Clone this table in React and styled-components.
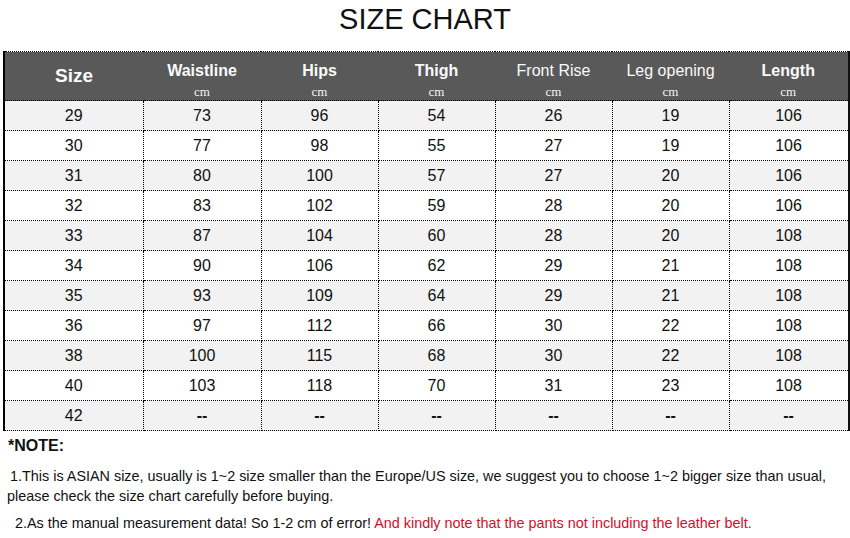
import React from 'react';
import styled, { createGlobalStyle } from 'styled-components';

const GlobalStyle = createGlobalStyle`
  body {
    margin: 0;
    background: #fff;
    font-family: Arial, "Liberation Sans", sans-serif;
  }
`;

const Page = styled.div`
  width: 850px;
  height: 538px;
  overflow: hidden;
`;

const Title = styled.h1`
  margin: 0;
  height: 51px;
  font-size: 29px;
  font-weight: 400;
  line-height: 39px;
  text-align: center;
  color: #111;
`;

const Table = styled.table`
  margin-left: 3px;
  width: 845px;
  border-collapse: collapse;
  table-layout: fixed;
  border-left: 2px solid #000;
  border-right: 3px solid #111;
`;

const HeadCell = styled.th`
  height: 49px;
  padding: ${(p) => (p.$big ? '14px' : '9px')} 0 0 0;
  background: #595959;
  color: #fafafa;
  border-top: 1px dotted #000;
  border-bottom: 1px dotted #000;
  font-weight: ${(p) => (p.$light ? 400 : 700)};
  vertical-align: top;
  box-sizing: border-box;
`;

const HeadTitle = styled.div`
  font-size: ${(p) => (p.$big ? '19px' : '16px')};
  line-height: 20px;
`;

const Unit = styled.div`
  font-family: "Liberation Serif", "Times New Roman", serif;
  font-size: 13px;
  font-weight: 400;
  line-height: 14px;
  margin-top: 4px;
  color: #f4f4f4;
`;

const Row = styled.tr`
  background: ${(p) => (p.$shade ? '#f2f2f2' : '#ffffff')};
`;

const Cell = styled.td`
  height: 29px;
  padding: 0;
  text-align: center;
  font-size: 16px;
  color: #111;
  border: 1px dotted #000;
  border-left: ${(p) => (p.$first ? 'none' : '1px dotted #000')};
  border-right: ${(p) => (p.$last ? 'none' : '1px dotted #000')};
  font-weight: ${(p) => (p.$dash ? 700 : 400)};
`;

const Notes = styled.div`
  padding: 4px 0 0 7px;
  color: #111;
`;

const NoteHead = styled.div`
  font-size: 16px;
  font-weight: 700;
  line-height: 22px;
  margin-left: 1px;
`;

const Note = styled.p`
  margin: ${(p) => p.$mt || '0'} 0 0 0;
  font-size: 14.4px;
  line-height: 20px;
  white-space: nowrap;
  text-indent: ${(p) => p.$indent || '3px'};
`;

const Red = styled.span`
  color: #d0102c;
`;

const columns = [
  { name: 'Size', big: true },
  { name: 'Waistline', unit: true },
  { name: 'Hips', unit: true },
  { name: 'Thigh', unit: true },
  { name: 'Front Rise', unit: true, light: true },
  { name: 'Leg opening', unit: true, light: true },
  { name: 'Length', unit: true },
];

const widths = [139, 118, 117, 117, 117, 117, 120];

const rows = [
  ['29', '73', '96', '54', '26', '19', '106'],
  ['30', '77', '98', '55', '27', '19', '106'],
  ['31', '80', '100', '57', '27', '20', '106'],
  ['32', '83', '102', '59', '28', '20', '106'],
  ['33', '87', '104', '60', '28', '20', '108'],
  ['34', '90', '106', '62', '29', '21', '108'],
  ['35', '93', '109', '64', '29', '21', '108'],
  ['36', '97', '112', '66', '30', '22', '108'],
  ['38', '100', '115', '68', '30', '22', '108'],
  ['40', '103', '118', '70', '31', '23', '108'],
  ['42', '--', '--', '--', '--', '--', '--'],
];

const App = () => (
  <Page>
    <GlobalStyle />
    <Title>SIZE CHART</Title>
    <Table>
      <colgroup>
        {widths.map((w, i) => (
          <col key={i} style={{ width: w }} />
        ))}
      </colgroup>
      <thead>
        <tr>
          {columns.map((c) => (
            <HeadCell key={c.name} $light={c.light} $big={c.big}>
              <HeadTitle $big={c.big}>{c.name}</HeadTitle>
              {c.unit && <Unit>cm</Unit>}
            </HeadCell>
          ))}
        </tr>
      </thead>
      <tbody>
        {rows.map((r, i) => (
          <Row key={r[0]} $shade={i % 2 === 0}>
            {r.map((v, j) => (
              <Cell
                key={j}
                $first={j === 0}
                $last={j === r.length - 1}
                $dash={v === '--'}
              >
                {v}
              </Cell>
            ))}
          </Row>
        ))}
      </tbody>
    </Table>
    <Notes>
      <NoteHead>*NOTE:</NoteHead>
      <Note $mt="9px">
        1.This is ASIAN size, usually is 1~2 size smaller than the Europe/US size, we suggest you to choose 1~2 bigger size than usual,
        <br />
        please check the size chart carefully before buying.
      </Note>
      <Note $mt="7px" $indent="8px">
        2.As the manual measurement data! So 1-2 cm of error!{' '}
        <Red>And kindly note that the pants not including the leather belt.</Red>
      </Note>
    </Notes>
  </Page>
);

export default App;
